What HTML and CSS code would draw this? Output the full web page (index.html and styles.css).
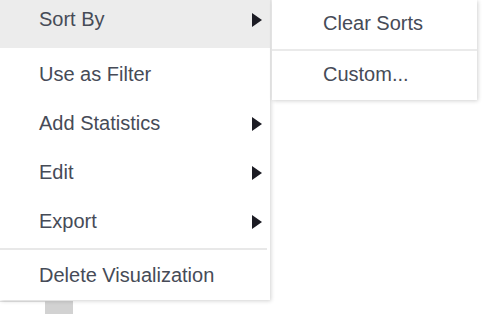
FILE: index.html
```html
<!DOCTYPE html>
<html lang="en">
<head>
    <meta charset="UTF-8">
    <meta name="viewport" content="width=device-width, initial-scale=1.0">
    <title>Visualization Menu</title>
    <link rel="stylesheet" href="styles.css">
</head>
<body>

<div class="menus">
    <ul class="menu">
        <li class="item active">Sort By <span class="arrow"></span></li>
        <li class="item">Use as Filter</li>
        <li class="item">Add Statistics <span class="arrow"></span></li>
        <li class="item">Edit <span class="arrow"></span></li>
        <li class="item">Export <span class="arrow"></span></li>
        <li class="divider"></li>
        <li class="item">Delete Visualization</li>
    </ul>

    <ul class="submenu">
        <li class="sub-item">Clear Sorts</li>
        <li class="sub-divider"></li>
        <li class="sub-item">Custom...</li>
    </ul>
</div>

<!-- scrollbar peeking out under the menu -->
<div class="scrollbar">
    <div class="track"></div>
    <div class="thumb"></div>
</div>

</body>
</html>
```

FILE: styles.css
```css
/* General Styles */
body {
    font-family: Arial, "Liberation Sans", sans-serif;
    background-color: #ffffff;
    margin: 0;
    overflow: hidden;
}

ul {
    list-style: none;
    margin: 0;
    padding: 0;
}

.menus {
    display: flex;
    align-items: flex-start;
    position: relative;
    z-index: 1;
}

/* Main menu */
.menu {
    width: 270px;
    margin-top: -5px;
    background: white;
    box-shadow: 1px 1px 4px rgba(0, 0, 0, 0.18);
}

.item {
    display: flex;
    align-items: center;
    justify-content: space-between;
    height: 49px;
    padding: 0 8px 0 39px;
    font-size: 20px;
    color: #464b57;
}

.item.active {
    height: 53px;
    margin-bottom: 2px;
    background-color: #ececec;
    align-items: flex-start;
    line-height: 49px;
}

.item.active .arrow {
    margin-top: 18px;
}

.arrow {
    width: 0;
    height: 0;
    border-top: 7px solid transparent;
    border-bottom: 7px solid transparent;
    border-left: 10px solid #1c1c24;
}

.divider {
    height: 2px;
    margin: 2px 3px 1px 0;
    background-color: #e8e8e8;
}

/* Sub menu */
.submenu {
    width: 205px;
    margin-left: 2px;
    background: white;
    box-shadow: 1px 1px 4px rgba(0, 0, 0, 0.18);
}

.sub-item {
    height: 49px;
    line-height: 46px;
    padding-left: 51px;
    font-size: 20px;
    color: #464b57;
}

.sub-divider {
    height: 2px;
    background-color: #eaeaea;
}

/* Scrollbar behind */
.scrollbar {
    display: flex;
    margin-top: 1px;
}

.track {
    width: 45px;
    height: 12px;
    border-top: 1px solid #e4e4e4;
}

.thumb {
    width: 28px;
    height: 13px;
    background-color: #d2d2d2;
}
```
